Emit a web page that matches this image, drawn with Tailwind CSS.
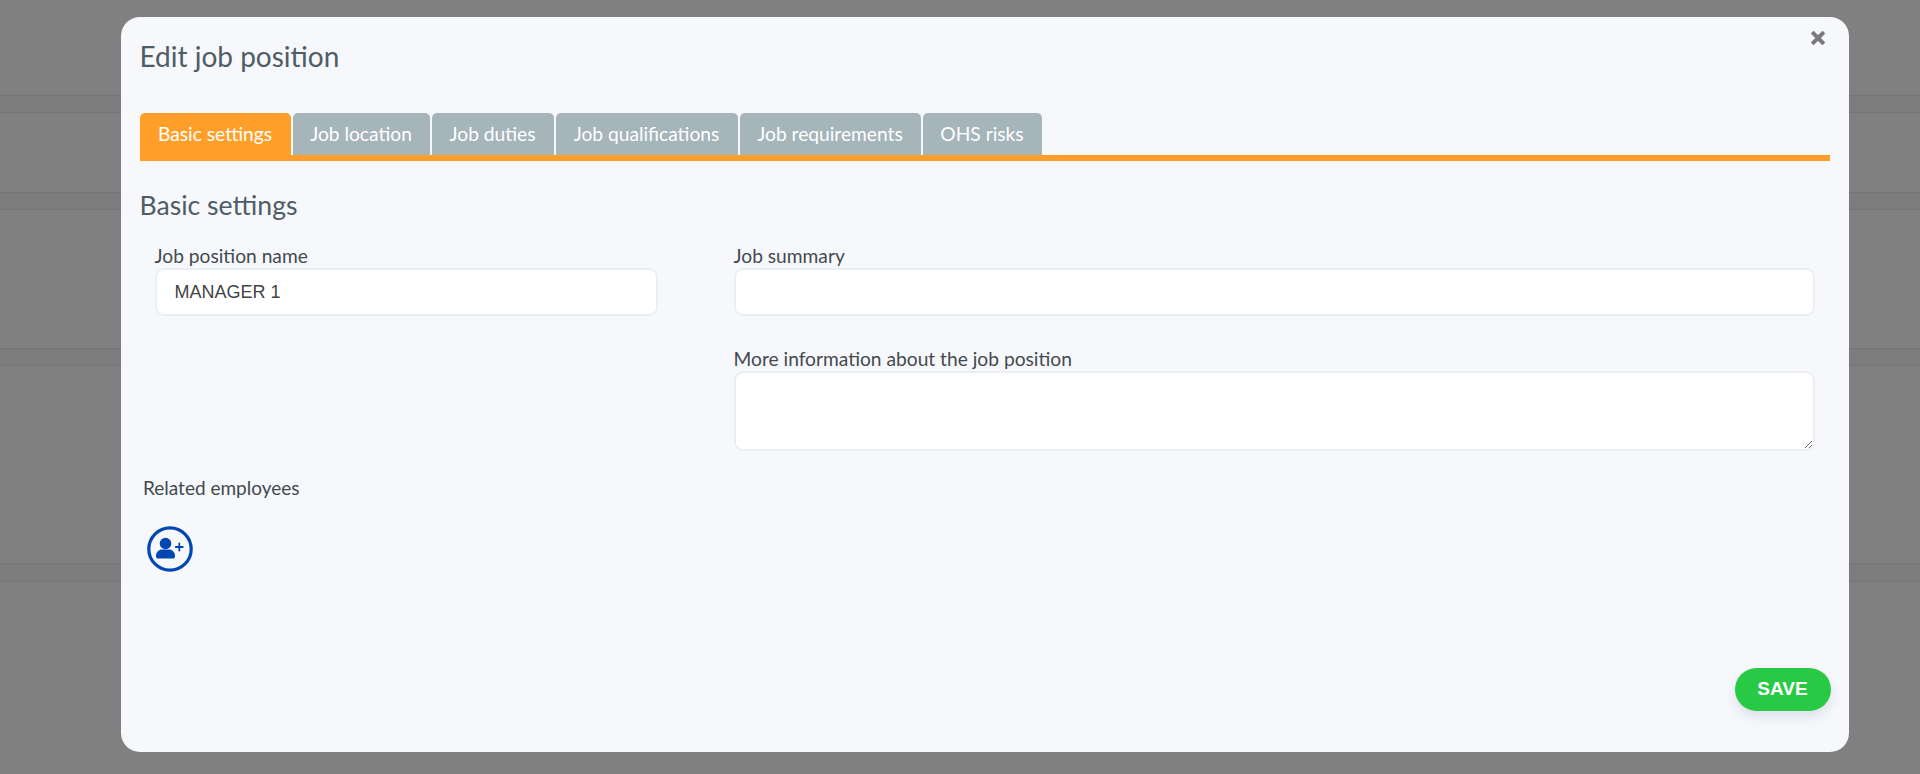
<!DOCTYPE html>
<html lang="en">
<head>
    <meta charset="UTF-8">
    <meta name="viewport" content="width=device-width, initial-scale=1.0">
    <title>Edit job position</title>
    <script src="https://cdn.jsdelivr.net/npm/@tailwindcss/browser@4"></script>
</head>
<body class="bg-[#808080] h-[774px] overflow-hidden relative font-['Lato',sans-serif]">
    <!-- page behind the overlay -->
    <div class="flex flex-col pt-[95px]">
        <div class="h-[18px] bg-[#7c7c7c] border-y border-[#757575]"></div>
        <div class="h-[79px]"></div>
        <div class="h-[18px] bg-[#7c7c7c] border-y border-[#757575]"></div>
        <div class="h-[138px]"></div>
        <div class="h-[18px] bg-[#7b7c7b] border-y border-[#757575]"></div>
        <div class="h-[197px]"></div>
        <div class="h-[19px] bg-[#7c7c7c] border-y border-[#757575]"></div>
    </div>

    <!-- modal -->
    <div class="absolute left-[121px] top-[17px] w-[1728px] h-[735px] bg-[#f7f8fc] rounded-[19px] pl-[18.5px] pr-[19px] flex flex-col">
        <button class="absolute right-[24px] top-[14px] w-[14px] h-[14px] text-[#7b7b7b]">
            <svg viewBox="0 0 14 14" class="w-[14px] h-[14px]"><path d="M2.5 2.5 L11.5 11.5 M11.5 2.5 L2.5 11.5" stroke="currentColor" stroke-width="4" stroke-linecap="square" fill="none"/></svg>
        </button>

        <h1 class="mt-[23px] text-[28px] leading-[32px] text-[#4e5d66]">Edit job position</h1>

        <div class="mt-[41px] flex gap-[2px] border-b-[6px] border-[#ff9f2a] h-[48px]">
            <div class="w-[151px] h-[48px] -mb-[6px] bg-[#ff9f2a] rounded-t-[5px] text-white text-[19.2px] flex items-center justify-center pb-[6px]">Basic settings</div>
            <div class="w-[137px] h-[42px] bg-[#a5b5ba] rounded-t-[5px] text-white text-[19.2px] flex items-center justify-center">Job location</div>
            <div class="w-[122px] h-[42px] bg-[#a5b5ba] rounded-t-[5px] text-white text-[19.2px] flex items-center justify-center">Job duties</div>
            <div class="w-[182px] h-[42px] bg-[#a5b5ba] rounded-t-[5px] text-white text-[19.2px] flex items-center justify-center">Job qualifications</div>
            <div class="w-[181px] h-[42px] bg-[#a5b5ba] rounded-t-[5px] text-white text-[19.2px] flex items-center justify-center">Job requirements</div>
            <div class="w-[119px] h-[42px] bg-[#a5b5ba] rounded-t-[5px] text-white text-[19.2px] flex items-center justify-center">OHS risks</div>
        </div>

        <h2 class="mt-[29px] text-[26.6px] leading-[30px] text-[#4e5d66]">Basic settings</h2>

        <div class="mt-[24px] flex pl-[15px] pr-[15px] gap-[76px]">
            <div class="w-[503px]">
                <label class="block text-[19.2px] leading-[24px] text-[#43494f]">Job position name</label>
                <input type="text" value="MANAGER 1" class="w-full h-[48px] bg-white border-2 border-[#eceef6] rounded-[9px] px-[18px] text-[18px] text-[#444] font-['Liberation_Sans',sans-serif] outline-none">
            </div>
            <div class="flex-1 flex flex-col">
                <label class="block text-[19.2px] leading-[24px] text-[#43494f]">Job summary</label>
                <input type="text" class="w-full h-[48px] bg-white border-2 border-[#eceef6] rounded-[9px] px-[18px] outline-none">
                <label class="block mt-[31px] text-[19.2px] leading-[24px] text-[#43494f]">More information about the job position</label>
                <textarea class="block w-full h-[80px] bg-white border-2 border-[#eceef6] rounded-[9px] px-[18px] outline-none"></textarea>
            </div>
        </div>

        <div class="mt-[25px] pl-[3.5px] text-[19px] leading-[24px] text-[#43494f]">Related employees</div>

        <button class="mt-[26px] ml-[7px] w-[46px] h-[46px]">
            <svg viewBox="0 0 46 46" class="w-[46px] h-[46px]">
                <circle cx="23" cy="23" r="21.2" fill="none" stroke="#0047b3" stroke-width="3.2"/>
                <circle cx="18.5" cy="17.5" r="5.8" fill="#0047b3"/>
                <path d="M9 30 C9 26 12 23.5 15 23.5 L22 23.5 C25 23.5 28 26 28 30 C28 32 27 32.5 26 32.5 L11 32.5 C10 32.5 9 32 9 30 Z" fill="#0047b3"/>
                <path d="M32.3 17.5 V24.5 M28.8 21 H35.8" stroke="#0047b3" stroke-width="1.8" fill="none" stroke-linecap="round"/>
            </svg>
        </button>

        <button class="absolute right-[18.5px] bottom-[41px] w-[96px] h-[43px] rounded-full bg-[#28c944] text-white text-[19px] font-bold font-['Liberation_Sans',sans-serif] shadow-[0_6px_12px_rgba(40,60,90,0.12)]">SAVE</button>
    </div>
</body>
</html>
